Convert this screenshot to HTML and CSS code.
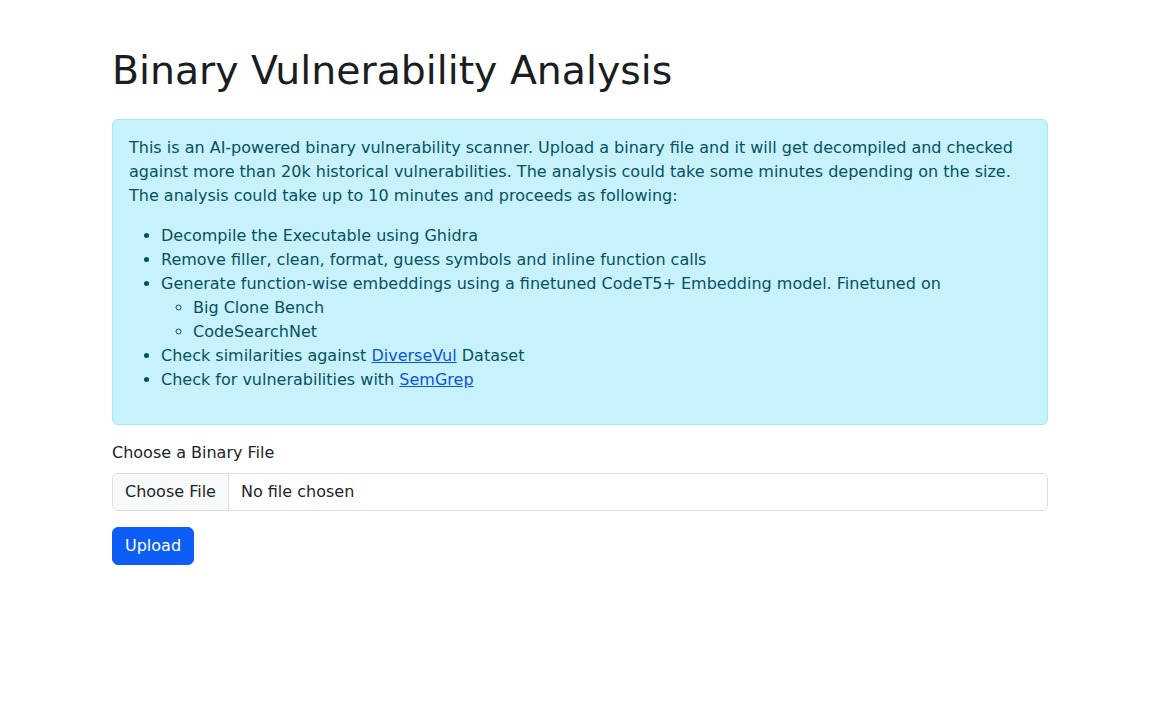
FILE: index.html
```html
<!DOCTYPE html>
<html lang="en">
<head>
<meta charset="utf-8">
<title>Binary Vulnerability Analysis</title>
<link rel="stylesheet" href="styles.css">
</head>
<body>
<div class="container">
  <h1 class="title">Binary Vulnerability Analysis</h1>
  <div class="alert">
    <p>This is an AI-powered binary vulnerability scanner. Upload a binary file and it will get decompiled and checked against more than 20k historical vulnerabilities. The analysis could take some minutes depending on the size. The analysis could take up to 10 minutes and proceeds as following:</p>
    <ul class="steps">
      <li>Decompile the Executable using Ghidra</li>
      <li>Remove filler, clean, format, guess symbols and inline function calls</li>
      <li>Generate function-wise embeddings using a finetuned CodeT5+ Embedding model. Finetuned on
        <ul class="sub">
          <li>Big Clone Bench</li>
          <li>CodeSearchNet</li>
        </ul>
      </li>
      <li>Check similarities against <a href="#">DiverseVul</a> Dataset</li>
      <li>Check for vulnerabilities with <a href="#">SemGrep</a></li>
    </ul>
  </div>
  <form class="upload-form">
    <div class="field">
      <label class="form-label" for="file">Choose a Binary File</label>
      <input class="form-control" type="file" id="file">
    </div>
    <button type="button" class="btn-primary">Upload</button>
  </form>
</div>
</body>
</html>
```
FILE: styles.css
```css
* { box-sizing: border-box; }
body {
  margin: 0;
  font-family: "DejaVu Sans", sans-serif;
  font-size: 16px;
  line-height: 1.5;
  color: #212529;
  background: #fff;
}
.container {
  max-width: 960px;
  margin: 0 auto;
  padding: 0 12px;
}
.title {
  font-size: 39.4px;
  font-weight: 500;
  line-height: 1.2;
  margin: 46.5px 0 25.22px;
  color: #1a1d21;
}
.alert {
  background: #c8f2fb;
  border: 1px solid #9eeaf9;
  border-radius: 6px;
  color: #055160;
  padding: 16px;
  margin-bottom: 16px;
}
.alert p { margin: 0 0 16px; }
.steps { margin: 0 0 16px; padding-left: 32px; }
.sub { margin: 0; padding-left: 32px; list-style-type: circle; }
a { color: #0a55d8; text-decoration: underline; }
.field { margin-bottom: 16px; }
.form-label { display: inline-block; margin-bottom: 8px; }
.form-control {
  display: block;
  width: 100%;
  padding: 6px 12px;
  font-family: inherit;
  font-size: 16px;
  line-height: 1.5;
  color: #212529;
  background: #fff;
  border: 1px solid #dee2e6;
  border-radius: 6px;
  overflow: hidden;
}
.form-control::file-selector-button {
  padding: 6px 12px;
  margin: -6px 12px -6px -12px;
  font-family: inherit;
  font-size: 16px;
  line-height: 1.5;
  color: #212529;
  background: #f8f9fa;
  border: 0 solid #dee2e6;
  border-right-width: 1px;
  border-radius: 0;
}
.btn-primary {
  display: inline-block;
  padding: 6px 12px;
  font-family: inherit;
  font-size: 16px;
  line-height: 1.5;
  color: #fff;
  background: #0d5ef7;
  border: 1px solid #0d5ef7;
  border-radius: 6px;
  cursor: pointer;
}
```
